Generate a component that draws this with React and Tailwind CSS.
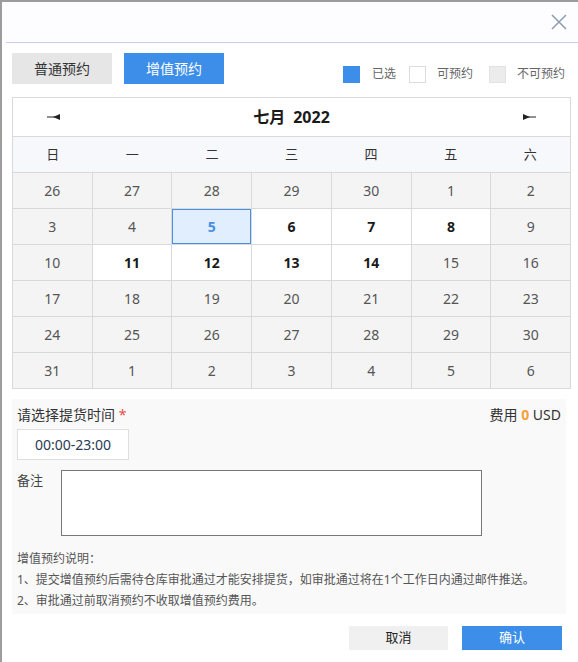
import React from 'react';

const FONT = { fontFamily: '"Noto Sans", "Noto Sans CJK SC", sans-serif' };

const WEEK = ['日', '一', '二', '三', '四', '五', '六'];

// s: 'off' grey, 'on' available, 'sel' selected
const DAYS = [
  [26, 'off'], [27, 'off'], [28, 'off'], [29, 'off'], [30, 'off'], [1, 'off'], [2, 'off'],
  [3, 'off'], [4, 'off'], [5, 'sel'], [6, 'on'], [7, 'on'], [8, 'on'], [9, 'off'],
  [10, 'off'], [11, 'on'], [12, 'on'], [13, 'on'], [14, 'on'], [15, 'off'], [16, 'off'],
  [17, 'off'], [18, 'off'], [19, 'off'], [20, 'off'], [21, 'off'], [22, 'off'], [23, 'off'],
  [24, 'off'], [25, 'off'], [26, 'off'], [27, 'off'], [28, 'off'], [29, 'off'], [30, 'off'],
  [31, 'off'], [1, 'off'], [2, 'off'], [3, 'off'], [4, 'off'], [5, 'off'], [6, 'off'],
];

const ArrowLeft = () => (
  <svg width="14" height="6" viewBox="0 0 14 6">
    <line x1="0" y1="3" x2="8" y2="3" stroke="#222" strokeWidth="1" />
    <polygon points="6,3 13,0 13,6" fill="#222" />
  </svg>
);

const ArrowRight = () => (
  <svg width="14" height="6" viewBox="0 0 14 6">
    <line x1="6" y1="3" x2="14" y2="3" stroke="#222" strokeWidth="1" />
    <polygon points="8,3 1,0 1,6" fill="#222" />
  </svg>
);

const DayCell = ({ d, s }) => {
  if (s === 'sel') {
    return (
      <div className="h-[35px] flex items-center justify-center bg-[#e1eefd] shadow-[inset_0_0_0_1px_#4a90e2] text-[14px] font-bold text-[#4a8fe4]">
        {d}
      </div>
    );
  }
  if (s === 'on') {
    return (
      <div className="h-[35px] flex items-center justify-center bg-white text-[14px] font-bold text-[#1a1a1a]">
        {d}
      </div>
    );
  }
  return (
    <div className="h-[35px] flex items-center justify-center bg-[#f4f4f4] text-[14px] text-[#555]">
      {d}
    </div>
  );
};

export default function App() {
  return (
    <div style={FONT} className="w-[578px] h-[662px] bg-white border-l-2 border-t-2 border-[#9c9c9c] overflow-hidden">
      {/* Header */}
      <div className="h-[40px] bg-[#fdfdff] flex items-center justify-end pr-[11px]">
        <svg width="16" height="16" viewBox="0 0 16 16">
          <path d="M1 1 L15 15 M15 1 L1 15" stroke="#8e9bb2" strokeWidth="1.5" fill="none" />
        </svg>
      </div>
      <div className="h-px bg-[#c9cbea] ml-[4px]" />

      <div className="pl-[10px] pr-[7px]">
        {/* Tabs + legend */}
        <div className="mt-[10px] flex items-start">
          <button className="w-[100px] h-[31px] bg-[#e6e6e6] text-[14px] text-[#333]">普通预约</button>
          <button className="ml-[12px] w-[100px] h-[31px] bg-[#3d8ee8] text-[14px] text-white">增值预约</button>
          <div className="ml-auto mt-[12px] mr-[6px] flex items-center text-[12px] text-[#666]">
            <span className="w-[17px] h-[17px] bg-[#3d8ee8]" />
            <span className="ml-[12px]">已选</span>
            <span className="ml-[13px] w-[17px] h-[17px] bg-white border border-[#dcdcdc]" />
            <span className="ml-[11px]">可预约</span>
            <span className="ml-[16px] w-[17px] h-[17px] bg-[#ececec] border border-[#e2e2e2]" />
            <span className="ml-[11px]">不可预约</span>
          </div>
        </div>

        {/* Calendar */}
        <div className="mt-[13px] border border-[#d9d9d9]">
          <div className="h-[38px] bg-white flex items-center justify-between px-[34px]">
            <ArrowLeft />
            <div className="text-[16px] font-bold text-[#1a1a1a] flex gap-[8px]">
              <span>七月</span>
              <span>2022</span>
            </div>
            <ArrowRight />
          </div>
          <div className="grid grid-cols-7 h-[36px] bg-[#f7f8fc] border-t border-[#d9d9d9]">
            {WEEK.map((w) => (
              <div key={w} className="flex items-center justify-center text-[13px] text-[#333]">{w}</div>
            ))}
          </div>
          <div className="grid grid-cols-7 gap-px pt-px bg-[#d9d9d9]">
            {DAYS.map(([d, s], i) => (
              <DayCell key={i} d={d} s={s} />
            ))}
          </div>
        </div>

        {/* Form panel */}
        <div className="mt-[10px] mr-[5px] bg-[#f9f9f9] pl-[5px] pr-[5px] pt-[5px] pb-[3px]">
          <div className="flex justify-between items-center text-[14px] text-[#333]">
            <div>
              请选择提货时间 <span className="text-[#f04b4b]">*</span>
            </div>
            <div>
              费用 <span className="font-bold text-[#f5a03c]">0</span> USD
            </div>
          </div>
          <div className="mt-[4px] w-[112px] h-[31px] bg-white border border-[#dedede] flex items-center justify-center text-[14px] text-[#2a3a55]">
            00:00-23:00
          </div>
          <div className="mt-[10px] flex items-start">
            <div className="w-[44px] text-[13px] text-[#444] pt-px">备注</div>
            <div className="w-[421px] h-[66px] bg-white border border-[#777]" />
          </div>
          <div className="mt-[12px] text-[12px] text-[#555] leading-[21px]">
            <div>增值预约说明：</div>
            <div>1、提交增值预约后需待仓库审批通过才能安排提货，如审批通过将在1个工作日内通过邮件推送。</div>
            <div>2、审批通过前取消预约不收取增值预约费用。</div>
          </div>
        </div>
      </div>

      {/* Footer */}
      <div className="mt-[12px] pr-[16px] flex justify-end gap-[14px]">
        <button className="w-[99px] h-[24px] bg-[#f0f0f0] text-[13px] text-[#222]">取消</button>
        <button className="w-[100px] h-[24px] bg-[#3d8ee8] text-[13px] text-white">确认</button>
      </div>
    </div>
  );
}
